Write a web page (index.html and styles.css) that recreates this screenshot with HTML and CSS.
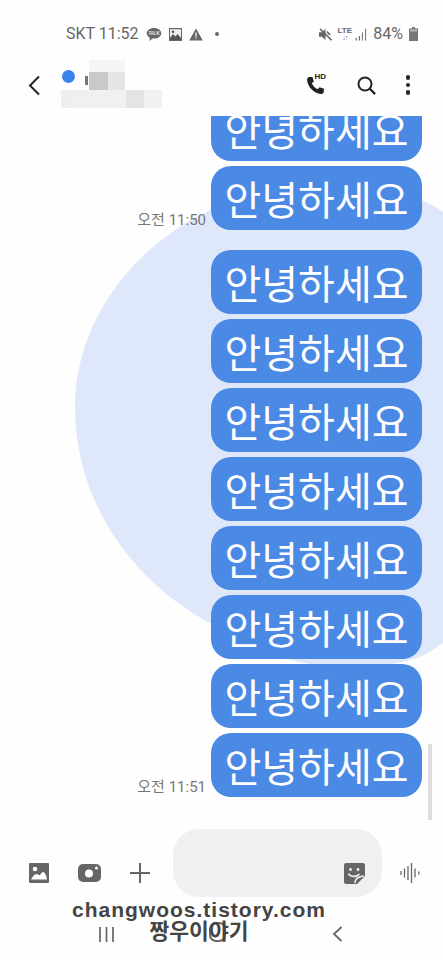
FILE: index.html

```html
<!DOCTYPE html>
<html lang="ko">
<head>
  <meta charset="UTF-8" />
  <meta name="viewport" content="width=device-width, initial-scale=1" />
  <title>메시지</title>
  <link rel="stylesheet" href="styles.css">
</head>
<body>
  <div class="screen">

    <div class="status">
      <div class="status-left">
        <span class="status-text">SKT 11:52</span>
        <svg class="talk-ico" width="16" height="15" viewBox="0 0 16 15"><path d="M8 1C3.9 1 .7 3.3.7 6.3c0 1.900 1.300 3.500 3.200 4.500L3.400 14l3.300-2.500c.4.100.9.100 1.300.100 4.100 0 7.300-2.400 7.300-5.300S12.100 1 8 1z" fill="#666"/><text x="8" y="8" text-anchor="middle" class="talk-label">TALK</text></svg>
        <svg width="13" height="13" viewBox="0 0 13 13"><path d="M0 0h13v13H0z" fill="#666"/><path d="M1 1.200h11v10.600H1z" fill="#eee"/><path d="M1 10l3-4 2.500 2.500L8.500 6l3.500 4v2H1z" fill="#555"/><circle cx="4" cy="3.800" r="1.300" fill="#555"/></svg>
        <svg width="14" height="13" viewBox="0 0 14 13"><path d="M7 .5l6.800 12H.2z" fill="#666"/><path d="M6.400 4.500h1.200v4.200H6.400zM6.400 9.500h1.200v1.200H6.400z" fill="#fff"/></svg>
        <span class="status-dot"></span>
      </div>
      <div class="status-right">
        <svg width="13" height="13" viewBox="0 0 13 13"><path d="M0 4.200h2.800L6.500 1v11L2.800 8.800H0z" fill="#666"/><path d="M1 .8l11.500 11.400" stroke="#666" stroke-width="1.600"/><path d="M8 3.500l3 3.500" stroke="#666" stroke-width="1.800"/></svg>
        <span class="lte"><span class="lte-word">LTE</span><span class="lte-arrows">↓↑</span></span>
        <svg class="signal-ico" width="12" height="13" viewBox="0 0 12 13"><path d="M.5 10h1.400v2.500H.5zM3.700 8h1.400v4.500H3.700zM6.900 4.500h1.100v8H6.900zM10 .8h1.100v11.700H10z" fill="#777"/></svg>
        <span class="status-text">84%</span>
        <svg width="9" height="14" viewBox="0 0 9 14"><path d="M3 0h3v1.500h3V14H0V1.500h3z" fill="#777"/><path d="M1 2.500h7v2H1z" fill="#bbb"/></svg>
      </div>
    </div>

    <div class="header">
      <svg class="back-ico" width="13" height="21" viewBox="0 0 13 21"><path d="M11 1.500L2 10.500l9 9" fill="none" stroke="#222" stroke-width="2"/></svg>
      <div class="header-tools">
        <div class="hd-call">
          <svg width="23" height="23" viewBox="0 0 24 24"><path d="M5.500 3.200L8.800 3l1.500 4.700-2.200 2c1.200 2.700 3.200 4.900 6 6.200l2.200-2.100 4.500 1.700-.2 3.300c-.2 1.200-1.500 2.300-3 2.100C10.200 20 3.800 13.500 3.200 6.300c-.1-1.500 1-2.900 2.300-3.100z" fill="#222"/></svg>
          <span class="hd-mark">HD</span>
        </div>
        <svg width="19" height="19" viewBox="0 0 19 19"><circle cx="8" cy="8" r="6.500" fill="none" stroke="#222" stroke-width="2"/><path d="M12.800 12.800l5.300 5.300" stroke="#222" stroke-width="2.200"/></svg>
        <span class="more-dots"><i></i><i></i><i></i></span>
      </div>
    </div>

    <!-- name is pixelated in the screenshot -->
    <div class="contact-blur">
      <span class="contact-dot"></span>
      <span class="px px-a"></span>
      <span class="px px-b"></span>
      <span class="px px-c"></span>
      <span class="px px-d"></span>
      <span class="px px-e"></span>
      <span class="px px-f"></span>
      <span class="px px-g"></span>
      <span class="px px-h"></span>
    </div>

    <div class="chat">
      <svg class="chat-bg" width="443" height="689" viewBox="0 116 443 689"><path d="M75 407C75 320 135 245 210 210C270 183 350 172 421 200C428 203 436 207 443 212L443 643C436 648 428 653 420 657C350 680 270 665 210 623C130 580 75 500 75 407Z" fill="#dfe8fb"/></svg>
      <div class="msg"><div class="bubble">안녕하세요</div></div>
      <div class="msg group-end"><span class="time">오전 11:50</span><div class="bubble">안녕하세요</div></div>
      <div class="msg"><div class="bubble">안녕하세요</div></div>
      <div class="msg"><div class="bubble">안녕하세요</div></div>
      <div class="msg"><div class="bubble">안녕하세요</div></div>
      <div class="msg"><div class="bubble">안녕하세요</div></div>
      <div class="msg"><div class="bubble">안녕하세요</div></div>
      <div class="msg"><div class="bubble">안녕하세요</div></div>
      <div class="msg"><div class="bubble">안녕하세요</div></div>
      <div class="msg"><span class="time">오전 11:51</span><div class="bubble">안녕하세요</div></div>
    </div>
    <div class="scroll-thumb"></div>

    <div class="composer">
      <svg class="tool tool-img" width="20" height="20" viewBox="0 0 20 20"><path d="M1 0h18a1 1 0 0 1 1 1v18a1 1 0 0 1-1 1H1a1 1 0 0 1-1-1V1a1 1 0 0 1 1-1z" fill="#666"/><circle cx="6" cy="6" r="2.300" fill="#fff"/><path d="M2 16.500c1.500-3 3.500-5.500 5.500-5.500 1.500 0 2 1.200 3 1.200S12.500 9 14 9c2 0 3.500 4 4 7.500z" fill="#fff"/></svg>
      <svg class="tool tool-cam" width="23" height="18" viewBox="0 0 23 18"><rect width="23" height="18" rx="5" fill="#666"/><circle cx="11" cy="9.500" r="4" fill="#fff"/><circle cx="18.500" cy="4" r="1.500" fill="#fff"/></svg>
      <svg class="tool tool-plus" width="20" height="20" viewBox="0 0 20 20"><path d="M10 0v20M0 10h20" stroke="#666" stroke-width="2"/></svg>
      <div class="input-box">
        <svg width="21" height="21" viewBox="0 0 21 21"><path d="M2 0h17a2 2 0 0 1 2 2v11l-8 8H2a2 2 0 0 1-2-2V2a2 2 0 0 1 2-2z" fill="#666"/><circle cx="6.500" cy="6.500" r="1.400" fill="#f0f0f0"/><circle cx="14" cy="6.500" r="1.400" fill="#f0f0f0"/><path d="M4.500 10.500c1.500 3.500 8 4 11 .5M11 20c0-4 3-6.500 9-7" fill="none" stroke="#f0f0f0" stroke-width="1.600"/></svg>
      </div>
      <svg class="tool tool-voice" width="20" height="20" viewBox="0 0 20 20"><path d="M1 8v4M4.500 5.500v9M8 3v14M11.500 0v20M15 5.500v9M18.800 8.500v3" stroke="#666" stroke-width="1.300"/></svg>
    </div>

    <div class="nav">
      <svg width="15" height="15" viewBox="0 0 15 15"><path d="M1 0v15M7.500 0v15M14 0v15" stroke="#666" stroke-width="1.700"/></svg>
      <span class="nav-home"></span>
      <svg width="11" height="16" viewBox="0 0 11 16"><path d="M9.500 1L2 8l7.500 7" fill="none" stroke="#666" stroke-width="1.800"/></svg>
    </div>

    <div class="watermark">
      <span class="wm-url">changwoos.tistory.com</span>
      <span class="wm-name">짱우이야기</span>
    </div>

  </div>
</body>
</html>
```

FILE: styles.css

```css
body {
  margin: 0;
  background: #fefefe;
  font-family: Roboto, "Noto Sans CJK KR", sans-serif;
  overflow: hidden;
}
.screen {
  position: relative;
  width: 443px;
  height: 960px;
  overflow: hidden;
  display: flex;
  flex-direction: column;
}

/* status bar */
.status {
  height: 52px;
  padding: 8px 25px 0 66px;
  display: flex;
  justify-content: space-between;
  align-items: center;
  color: #666;
}
.status-left, .status-right {
  display: flex;
  align-items: center;
}
.status-left { gap: 7px; }
.status-right { gap: 6px; }
.status-text {
  font-size: 16px;
  line-height: 20px;
  color: #666;
  white-space: nowrap;
}
.talk-label {
  font-family: "Liberation Sans", sans-serif;
  font-size: 4.5px;
  font-weight: 700;
  fill: #eee;
}
.status-dot {
  width: 4px;
  height: 4px;
  margin-left: 5px;
  border-radius: 50%;
  background: #666;
}
.lte {
  display: flex;
  flex-direction: column;
  align-items: center;
  width: 13px;
  font-family: "Liberation Sans", sans-serif;
  color: #666;
}
.lte-word { font-size: 8px; line-height: 8px; font-weight: 700; }
.lte-arrows { font-size: 7px; line-height: 6px; font-weight: 700; letter-spacing: -1px; }
.signal-ico { margin-left: -2px; }

/* header */
.header {
  height: 50px;
  margin-bottom: 6px;
  padding: 0 33px 0 28px;
  display: flex;
  justify-content: space-between;
  align-items: center;
}
.back-ico { display: block; }
.header-tools {
  display: flex;
  align-items: center;
  gap: 30px;
}
.hd-call {
  position: relative;
  width: 22px;
  height: 23px;
  margin-right: 1px;
}
.hd-mark {
  position: absolute;
  top: -2px;
  left: 10px;
  font-family: "Liberation Sans", sans-serif;
  font-size: 8px;
  line-height: 9px;
  font-weight: 700;
  color: #222;
  background: #fefefe;
  padding-left: 1px;
}
.more-dots {
  display: flex;
  flex-direction: column;
  gap: 3px;
}
.more-dots i {
  width: 4.500px;
  height: 4.500px;
  border-radius: 50%;
  background: #222;
}

/* pixelated contact name */
.contact-blur {
  position: absolute;
  left: 61px;
  top: 60px;
  width: 101px;
  height: 48px;
}
.contact-dot {
  position: absolute;
  left: 1px;
  top: 10px;
  width: 13px;
  height: 13px;
  border-radius: 50%;
  background: #3b82ea;
}
.px { position: absolute; }
.px-a { left: 28px; top: 0; width: 36px; height: 12px; background: #f5f5f5; }
.px-b { left: 28px; top: 12px; width: 19px; height: 18px; background: #c9c9c9; }
.px-c { left: 47px; top: 12px; width: 17px; height: 18px; background: #e6e6e6; }
.px-d { left: 24px; top: 16px; width: 3px; height: 9px; background: #777; }
.px-e { left: 0; top: 30px; width: 11px; height: 18px; background: #eee; }
.px-f { left: 11px; top: 30px; width: 54px; height: 18px; background: #f0f0f0; }
.px-g { left: 65px; top: 30px; width: 18px; height: 18px; background: #e4e4e4; }
.px-h { left: 83px; top: 30px; width: 18px; height: 18px; background: #f1f1f1; }

/* messages */
.chat {
  position: relative;
  z-index: 0;
  height: 689px;
  padding-bottom: 8px;
  box-sizing: border-box;
  overflow: hidden;
  display: flex;
  flex-direction: column;
  justify-content: flex-end;
  gap: 5px;
  flex-shrink: 0;
}
.chat-bg {
  position: absolute;
  z-index: -1;
  left: 0;
  top: 0;
}
.msg {
  display: flex;
  justify-content: flex-end;
  align-items: flex-end;
  gap: 5px;
  padding-right: 21px;
  flex-shrink: 0;
}
.group-end { margin-bottom: 15px; }
.bubble {
  width: 211px;
  height: 64px;
  border-radius: 20px;
  background: #4a8ae5;
  color: #fff;
  font-family: "Noto Sans CJK KR", sans-serif;
  font-size: 40px;
  line-height: 64px;
  text-align: center;
  white-space: nowrap;
}
.time {
  font-size: 15px;
  line-height: 20px;
  color: #777;
  white-space: nowrap;
}
.scroll-thumb {
  position: absolute;
  left: 428px;
  top: 744px;
  width: 4px;
  height: 76px;
  background: #ddd;
}

/* composer */
.composer {
  height: 105px;
  padding: 24px 23px 13px 29px;
  box-sizing: border-box;
  display: flex;
  align-items: flex-end;
  flex-shrink: 0;
}
.tool { display: block; margin-bottom: 14px; flex-shrink: 0; }
.tool-cam { margin-left: 29px; margin-bottom: 15px; }
.tool-plus { margin-left: 29px; }
.tool-voice { margin-left: 18px; }
.input-box {
  width: 210px;
  height: 68px;
  margin-left: 23px;
  padding: 0 17px 13px 0;
  box-sizing: border-box;
  border-radius: 26px;
  background: #f0f0f0;
  display: flex;
  justify-content: flex-end;
  align-items: flex-end;
}

/* nav bar */
.nav {
  height: 50px;
  padding: 0 100px 18px 99px;
  box-sizing: border-box;
  display: flex;
  justify-content: space-between;
  align-items: flex-end;
}
.nav-home {
  width: 13px;
  height: 16px;
  margin-right: 12px;
  border: 2px solid #666;
  border-radius: 7px;
}

/* watermark over the nav bar */
.watermark {
  position: absolute;
  left: 72px;
  top: 899px;
  width: 254px;
  display: flex;
  flex-direction: column;
  align-items: center;
  color: #444;
  font-weight: 700;
  white-space: nowrap;
}
.wm-url {
  font-family: "Liberation Sans", sans-serif;
  font-size: 21px;
  line-height: 22px;
  letter-spacing: 1px;
}
.wm-name {
  font-family: "Noto Sans CJK KR", sans-serif;
  font-size: 21.5px;
  line-height: 17px;
}
```
